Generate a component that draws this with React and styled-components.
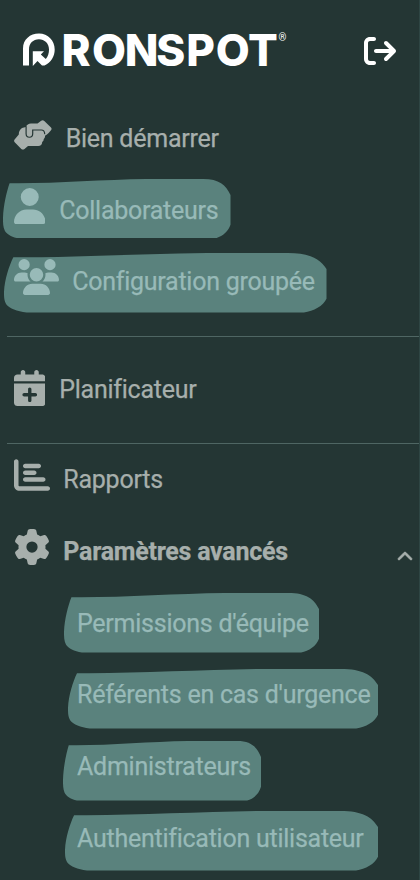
import React from "react";
import styled, { createGlobalStyle } from "styled-components";
import {
  FaArrowRightFromBracket,
  FaCalendarPlus,
  FaChartBar,
  FaChevronUp,
  FaGear,
  FaUser,
  FaUsers,
} from "react-icons/fa6";

const GlobalStyle = createGlobalStyle`
  *, *::before, *::after { box-sizing: border-box; }
  body { margin: 0; background: #243634; }
`;

const Sidebar = styled.aside`
  display: flex;
  flex-direction: column;
  width: 420px;
  height: 880px;
  overflow: hidden;
  background: #243634;
  border-right: 1px solid #2e4543;
  color: #a7afac;
  font-family: Roboto, sans-serif;
`;

const Header = styled.header`
  display: flex;
  flex: none;
  align-items: center;
  justify-content: space-between;
  height: 101px;
  margin-bottom: 1px;
  padding: 0 23px 0 20px;
`;

const Logo = styled.svg`
  width: 270px;
  height: 70px;
  display: block;
  fill: #fff;
`;

const Wordmark = styled.text`
  font-family: Inter, sans-serif;
  font-weight: 800;
  font-size: 44px;
  text-anchor: middle;
`;

const Registered = styled.text`
  font-family: Roboto, sans-serif;
  font-size: 10px;
`;

const LogoutButton = styled.button`
  display: flex;
  padding: 0;
  border: 0;
  background: none;
  color: #fff;
  font-size: 32px;
`;

const Section = styled.nav`
  display: flex;
  flex: none;
  flex-direction: column;
  height: ${(p) => p.$height}px;
  padding-top: ${(p) => p.$top || 0}px;
  margin-left: 7px;
  border-bottom: ${(p) => (p.$last ? "0" : "1px solid #4f6663")};
`;

const Row = styled.a`
  position: relative;
  display: flex;
  flex: none;
  align-items: center;
  height: 71.7px;
  padding-left: ${(p) => (p.$nested ? 70 : 6.5)}px;
  color: ${(p) => (p.$marked ? "#98bab8" : "inherit")};
`;

const IconBox = styled.span`
  position: relative;
  display: flex;
  flex: none;
  margin: 0 ${(p) => p.$gap}px ${(p) => p.$lift * 2}px 0;

  svg {
    width: ${(p) => p.$w}px;
    height: ${(p) => p.$h}px;
  }
`;

const Label = styled.span`
  position: relative;
  padding-top: ${(p) => p.$drop ?? 1.5}px;
  font-size: 25px;
  line-height: 30px;
  white-space: nowrap;
  font-weight: ${(p) => (p.$bold ? 700 : 400)};
  letter-spacing: -0.25px;
  -webkit-text-stroke: 0.25px currentColor;
`;

const Toggle = styled.span`
  display: flex;
  margin: 11px 6.5px 0 auto;
  font-size: 16px;

  svg {
    stroke: currentColor;
    stroke-width: 24px;
  }
`;

const Marker = styled.svg`
  position: absolute;
  left: ${(p) => p.$x}px;
  top: ${(p) => p.$y}px;
  width: ${(p) => p.$w}px;
  height: 59.5px;
  fill: #5a827d;
`;

function Highlight({ x, y, w }) {
  return (
    <Marker $x={x} $y={y} $w={w} viewBox="0 0 100 100" preserveAspectRatio="none">
      <path d="M2.9 7 C22 8 43 1 63 0 H88 C95 0 98 10 100 27 V77 C99 89 96 98 93 100 H7 C4 98 1.7 93 .8 87 C0 80 0 74 0 65 C.2 44 1.6 21 2.9 7Z" />
    </Marker>
  );
}

function HandsIcon() {
  return (
    <svg viewBox="0 0 38 30" fill="none">
      <path
        fill="currentColor"
        d="M27.2 .7Q28.8-.4 30.3 .9L37 7.5Q38.2 8.8 37 10.2L34.6 13Q33 14.7 31 15.7Q31.3 17.5 29.8 19Q29.8 21 28.2 22Q28 26 24.2 26H14L10.5 29Q8.8 30.2 7.3 28.9L.7 22.3Q-.5 21 .6 19.4L4.8 14.5Q4.7 10.2 8 8L11.8 7Q13.3 3.7 17 3.5H23.5Z"
      />
      <path
        stroke="#243634"
        strokeWidth="1.2"
        strokeLinecap="round"
        d="M12.1 6.7V13.8C12.1 18.4 18.7 18.4 18.7 13.8V10H27.4Q30.4 10 30.7 13.7"
      />
    </svg>
  );
}

function Item({ icon: Icon, w, h = 36, gap, lift, label, mark, nested, bold, drop, children }) {
  return (
    <Row $nested={nested} $marked={!!mark}>
      {mark && <Highlight {...mark} />}
      {Icon && (
        <IconBox $w={w} $h={h} $gap={gap} $lift={lift}>
          <Icon />
        </IconBox>
      )}
      <Label $bold={bold} $drop={drop}>{label}</Label>
      {children}
    </Row>
  );
}

export default function App() {
  return (
    <>
      <GlobalStyle />
      <Sidebar>
        <Header>
          <Logo viewBox="20 15.5 270 70" aria-label="Ronspot">
            <path d="M23 65V48C23 39 30 33 39 33C48 33 54.7 40 54.7 49C54.7 56 51 62 44.5 65H42L37.5 60.5L32.8 65.5V50.8H44L40.8 54L45.8 58.5C48 56 49 53 49 49C49 43 44.5 38.8 39 38.8C33 38.8 29 43 29 49V65Z" />
            <Wordmark y="65" x="76 109 141.5 170.8 200.5 232.7 263">RONSPOT</Wordmark>
            <Registered x="278.5" y="40">®</Registered>
          </Logo>
          <LogoutButton aria-label="Se déconnecter">
            <FaArrowRightFromBracket />
          </LogoutButton>
        </Header>

        <Section $height={235}>
          <Item icon={HandsIcon} w={38} h={30} gap={14.2} lift={2.5} label="Bien démarrer" />
          <Item icon={FaUser} w={31.5} gap={14.2} lift={4} label="Collaborateurs" mark={{ x: -4, y: 5.3, w: 227.5 }} drop={3} />
          <Item icon={FaUsers} w={45} gap={13.7} lift={4} label="Configuration groupée" mark={{ x: -3, y: 8, w: 322.5 }} />
        </Section>

        <Section $height={107} $top={16}>
          <Item icon={FaCalendarPlus} w={31.5} gap={14.2} lift={1} label="Planificateur" />
        </Section>

        <Section $height={436} $last>
          <Item icon={FaChartBar} w={36} gap={13.8} lift={4.5} label="Rapports" drop={0.5} />
          <Item icon={FaGear} w={36} gap={13.8} lift={4.5} label="Paramètres avancés" bold drop={0.5}>
            <Toggle>
              <FaChevronUp />
            </Toggle>
          </Item>
          <Item nested label="Permissions d'équipe" mark={{ x: 57, y: 6, w: 255 }} />
          <Item nested label="Référents en cas d'urgence" mark={{ x: 61, y: 10, w: 310 }} drop={1} />
          <Item nested label="Administrateurs" mark={{ x: 55.7, y: 10.3, w: 198 }} drop={1} />
          <Item nested label="Authentification utilisateur" mark={{ x: 58, y: 8.7, w: 313 }} />
        </Section>
      </Sidebar>
    </>
  );
}
